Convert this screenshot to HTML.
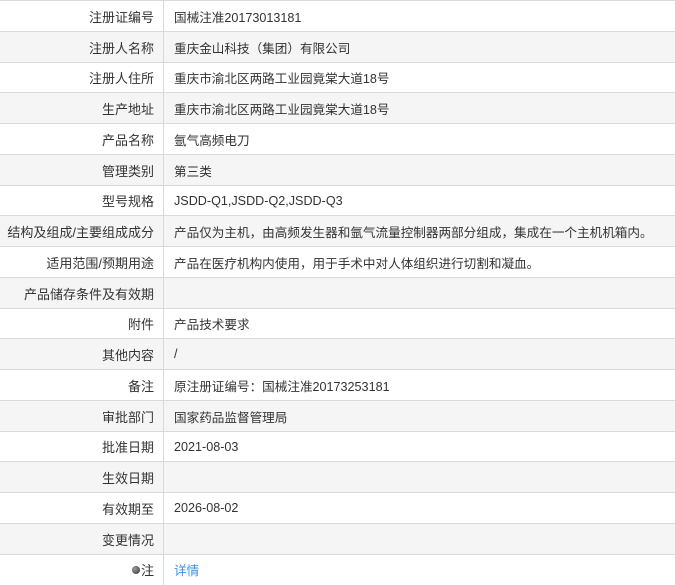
<!DOCTYPE html>
<html><head><meta charset="utf-8"><style>
body{margin:0;width:675px;height:573px;overflow:hidden;background:#fff;font-family:"Liberation Sans","Noto Sans CJK SC",sans-serif;font-size:13px;color:#333}
.r{position:absolute;left:0;width:675px;border-top:1px solid #d9d9d9;box-sizing:border-box}
.r.g{background:#f5f5f5}
.l{position:absolute;left:0;top:-1px;bottom:0;width:164px;border-right:1px solid #d9d9d9;text-align:right;padding-right:9px;box-sizing:border-box;display:flex;align-items:center;justify-content:flex-end}
.v{position:absolute;left:174px;top:-1px;bottom:0;display:flex;align-items:center;white-space:nowrap;font-size:12.6px}
a{color:#3b8ee8;text-decoration:none}
.dot{display:inline-block;width:8px;height:8px;border-radius:50%;background:radial-gradient(circle at 35% 35%,#999,#333);margin-right:1px}
</style></head><body>
<div id="c"></div>
<script>
var d=[["注册证编号","国械注准20173013181"],["注册人名称","重庆金山科技（集团）有限公司"],["注册人住所","重庆市渝北区两路工业园竟棠大道18号"],["生产地址","重庆市渝北区两路工业园竟棠大道18号"],["产品名称","氩气高频电刀"],["管理类别","第三类"],["型号规格","JSDD-Q1,JSDD-Q2,JSDD-Q3"],["结构及组成/主要组成成分","产品仅为主机，由高频发生器和氩气流量控制器两部分组成，集成在一个主机机箱内。"],["适用范围/预期用途","产品在医疗机构内使用，用于手术中对人体组织进行切割和凝血。"],["产品储存条件及有效期",""],["附件","产品技术要求"],["其他内容","/"],["备注","原注册证编号：国械注准20173253181"],["审批部门","国家药品监督管理局"],["批准日期","2021-08-03"],["生效日期",""],["有效期至","2026-08-02"],["变更情况",""],["<span class='dot'></span>注","<a>详情</a>"]];
var h="";
for(var i=0;i<d.length;i++){var t=Math.round(i*30.75),b=Math.round((i+1)*30.75);
h+='<div class="r'+(i%2?' g':'')+'" style="top:'+t+'px;height:'+(b-t+1)+'px"><div class="l">'+d[i][0]+'</div><div class="v">'+d[i][1]+'</div></div>';}
document.getElementById("c").innerHTML=h;
</script>
</body></html>
